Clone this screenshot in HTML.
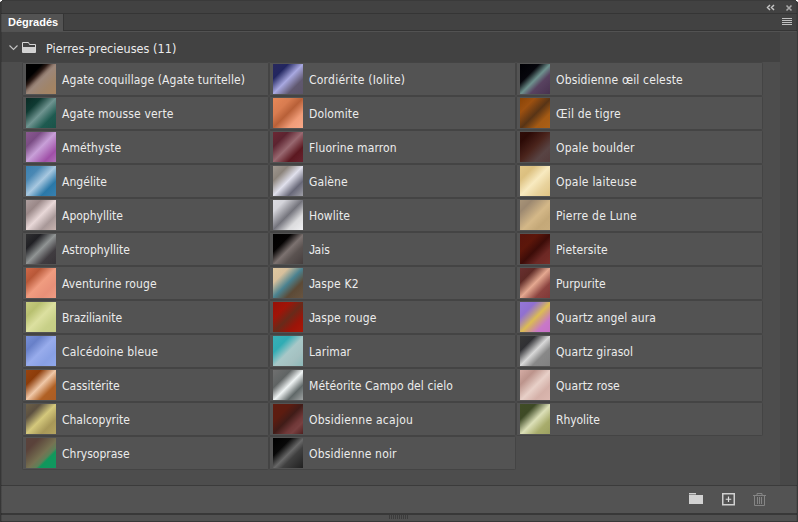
<!DOCTYPE html>
<html lang="fr">
<head>
<meta charset="utf-8">
<title>Dégradés</title>
<style>
html,body{margin:0;padding:0}
body{width:798px;height:522px;overflow:hidden;position:relative;background:#4d4d4d;font-family:"DejaVu Sans Condensed","DejaVu Sans","Liberation Sans",sans-serif;font-size:12px;color:#ececec}
div,i,span,svg{position:absolute;display:block;box-sizing:border-box}
.topbar{left:0;top:0;width:798px;height:13px;background:#424242}
.topline{left:0;top:13px;width:798px;height:1px;background:#353535}
.tabbar{left:0;top:14px;width:798px;height:17px;background:#424242;border-bottom:1px solid #353535}
.tab{left:1px;top:0;width:63px;height:17px;border-right:1px solid #353535;background:#535353;font-family:"Liberation Sans",sans-serif;font-weight:bold;font-size:11px;line-height:17px;color:#fff;padding-left:7px;white-space:nowrap}
.tabline{left:0;top:31px;width:798px;height:1px;background:#525252}
.bl{left:0;top:0;width:2px;height:522px;background:linear-gradient(90deg,#363636 0,#363636 1px,rgba(0,0,0,.13) 1px,rgba(0,0,0,.13) 2px)}
.br{left:796px;top:0;width:2px;height:522px;background:linear-gradient(90deg,rgba(0,0,0,.08) 0,rgba(0,0,0,.08) 1px,#393939 1px,#393939 2px)}
.hdr{left:1px;top:32px;width:779px;height:30px;background:#424242}
.hdr .t{left:45px;top:2px;font-size:12.5px;letter-spacing:.05px;line-height:30px;white-space:nowrap;color:#ececec}
.scroll{left:780px;top:32px;width:16px;height:453px;background:#484848}
.list{left:0;top:0;width:0;height:0}
.col{top:62px;width:247px;height:408px}
.c1{left:22px}.c2{left:269px}.c3{left:516px}
.row{position:relative;width:247px;height:34px;border:1px solid #444;border-radius:1.5px;background:#535353}
.sw{left:3px;top:1px;width:30px;height:30px}
.nm{left:39px;top:1px;line-height:32px;white-space:nowrap}
.botline{left:0;top:485px;width:798px;height:1px;background:#3b3b3b}
.botbar{left:1px;top:486px;width:796px;height:27px;background:#535353}
.botline2{left:0;top:513px;width:798px;height:2px;background:#383838}
.strip{left:1px;top:515px;width:796px;height:6px;background:#505050}
.botedge{left:0;top:521px;width:798px;height:1px;background:#383838}
.j{font-weight:normal;font-family:"Liberation Sans",sans-serif;letter-spacing:-0.6px}
.cn{width:1px;height:1px;background:#fff}
.topedge{left:0;top:0;width:798px;height:1px;background:#3a3a3a}
</style>
</head>
<body>
<div class="topbar"></div>
<div class="topline"></div>
<div class="tabbar"><div class="tab">Dégradés</div></div>
<div class="tabline"></div>
<div class="hdr">
<svg style="left:7px;top:12px" width="12" height="7" viewBox="0 0 12 7"><path d="M1.5 1.5 L5.5 5.5 L9.5 1.5" fill="none" stroke="#c4c4c4" stroke-width="1.1"/></svg>
<svg style="left:21px;top:10px" width="14" height="11" viewBox="0 0 14 11"><path d="M0.5 0.5 H6.5 L7.5 2.5 H13.5 V10.5 H0.5 Z" fill="none" stroke="#d6d6d6"/><rect x="1" y="5" width="12" height="5.5" fill="#d2d2d2"/></svg>
<span class="t">Pierres-precieuses (11)</span>
</div>
<div class="scroll"></div>
<svg style="left:766px;top:4px" width="10" height="8" viewBox="0 0 10 8"><path d="M4 1 L1.5 3.5 L4 6 M8 1 L5.5 3.5 L8 6" fill="none" stroke="#c6c6c6" stroke-width="1.45"/></svg>
<svg style="left:785px;top:4px" width="8" height="8" viewBox="0 0 8 8"><path d="M1.5 1.5 L6.5 6.5 M6.5 1.5 L1.5 6.5" fill="none" stroke="#a8a8a8" stroke-width="1.6"/></svg>
<svg style="left:782px;top:18px" width="10" height="7" viewBox="0 0 10 7"><path d="M0 0.5 H10 M0 2.5 H10 M0 4.5 H10 M0 6.5 H10" stroke="#c0c0c0" stroke-width="1"/></svg>
<div class="list">
<div class="col c1">
<div class="row"><i class="sw" style="background:linear-gradient(135deg,#000 0%,#000 27%,#2a1a14 36%,#5a463e 41%,#8a7468 46%,#9c877a 51%,#a08468 75%,#a8845f 100%)"></i><span class="nm" style="letter-spacing:0.106px">Agate coquillage (Agate turitelle)</span></div>
<div class="row"><i class="sw" style="background:linear-gradient(135deg,#0a2a24 0%,#0f3a32 25%,#6f9490 50%,#1e5a50 75%,#1a5248 100%)"></i><span class="nm" style="letter-spacing:0.159px">Agate mousse verte</span></div>
<div class="row"><i class="sw" style="background:linear-gradient(135deg,#8a5a90 0%,#7a4c84 25%,#c8a0d8 50%,#a050a8 80%,#b070b8 100%)"></i><span class="nm" style="letter-spacing:0.075px">Améthyste</span></div>
<div class="row"><i class="sw" style="background:linear-gradient(135deg,#3a80b0 0%,#4a88b4 25%,#a8c8e0 50%,#2a78a8 75%,#3880b0 100%)"></i><span class="nm" style="letter-spacing:0.057px">Angélite</span></div>
<div class="row"><i class="sw" style="background:linear-gradient(135deg,#b0a0a0 0%,#9a8888 25%,#e8d8d8 50%,#a89898 75%,#c8b4b0 100%)"></i><span class="nm" style="letter-spacing:0.0px">Apophyllite</span></div>
<div class="row"><i class="sw" style="background:linear-gradient(135deg,#303032 0%,#202024 25%,#909494 50%,#403c40 75%,#383438 100%)"></i><span class="nm" style="letter-spacing:-0.017px">Astrophyllite</span></div>
<div class="row"><i class="sw" style="background:linear-gradient(135deg,#d06848 0%,#b85838 25%,#f09c80 50%,#e89078 75%,#f09c84 100%)"></i><span class="nm" style="letter-spacing:0.1px">Aventurine rouge</span></div>
<div class="row"><i class="sw" style="background:linear-gradient(135deg,#c8cc80 0%,#b8c070 25%,#dce0a0 50%,#c8d088 75%,#c4cc84 100%)"></i><span class="nm" style="letter-spacing:-0.036px">Brazilianite</span></div>
<div class="row"><i class="sw" style="background:linear-gradient(135deg,#7890d8 0%,#6880c8 25%,#98acec 50%,#88a0e4 75%,#90a8ec 100%)"></i><span class="nm" style="letter-spacing:0.193px">Calcédoine bleue</span></div>
<div class="row"><i class="sw" style="background:linear-gradient(135deg,#984410 0%,#8c3c0a 25%,#f0c8a8 50%,#b06024 74%,#aa5c24 100%)"></i><span class="nm" style="letter-spacing:0.01px">Cassitérite</span></div>
<div class="row"><i class="sw" style="background:linear-gradient(135deg,#6c6048 0%,#5c5040 24%,#d4c87c 50%,#a89858 75%,#b4a460 100%)"></i><span class="nm" style="letter-spacing:-0.027px">Chalcopyrite</span></div>
<div class="row"><i class="sw" style="background:linear-gradient(135deg,#5a423c 0%,#5a423a 22%,#767252 54%,#5e8058 66%,#10985c 72%,#109860 100%)"></i><span class="nm" style="letter-spacing:0.0px">Chrysoprase</span></div>
</div>
<div class="col c2">
<div class="row"><i class="sw" style="background:linear-gradient(135deg,#28285c 0%,#222660 25%,#a8a8e0 50%,#605870 75%,#5c5468 100%)"></i><span class="nm" style="letter-spacing:0.239px">Cordiérite (Iolite)</span></div>
<div class="row"><i class="sw" style="background:linear-gradient(135deg,#e88858 0%,#d87c50 30%,#b86038 50%,#f09c78 75%,#f8a888 100%)"></i><span class="nm" style="letter-spacing:0.129px">Dolomite</span></div>
<div class="row"><i class="sw" style="background:linear-gradient(135deg,#6c2834 0%,#5c2430 25%,#986870 50%,#5c1820 75%,#682430 100%)"></i><span class="nm" style="letter-spacing:0.114px">Fluorine marron</span></div>
<div class="row"><i class="sw" style="background:linear-gradient(135deg,#a09890 0%,#8c847c 25%,#e0e0ec 50%,#686878 75%,#a0a0a8 100%)"></i><span class="nm" style="letter-spacing:0.12px">Galène</span></div>
<div class="row"><i class="sw" style="background:linear-gradient(135deg,#dcdce2 0%,#d4d4da 20%,#74747c 50%,#dcdcde 74%,#f0f0f2 100%)"></i><span class="nm" style="letter-spacing:0.067px">Howlite</span></div>
<div class="row"><i class="sw" style="background:linear-gradient(135deg,#000 0%,#050303 30%,#7c7270 52%,#5a5250 70%,#463e3e 100%)"></i><span class="nm" style="letter-spacing:0.15px"><b class="j">J</b>ais</span></div>
<div class="row"><i class="sw" style="background:linear-gradient(135deg,#e0c8a0 0%,#d8c09c 25%,#4a8290 50%,#5c4a36 72%,#685440 100%)"></i><span class="nm" style="letter-spacing:0.2px"><b class="j">J</b>aspe K2</span></div>
<div class="row"><i class="sw" style="background:linear-gradient(135deg,#981008 0%,#a01408 28%,#682a1a 52%,#9c1408 76%,#a81808 100%)"></i><span class="nm" style="letter-spacing:0.2px"><b class="j">J</b>aspe rouge</span></div>
<div class="row"><i class="sw" style="background:linear-gradient(135deg,#38b0b8 0%,#30acb4 28%,#a8c8c8 52%,#a4c0c0 75%,#8cb8b8 100%)"></i><span class="nm" style="letter-spacing:0.067px">Larimar</span></div>
<div class="row"><i class="sw" style="background:linear-gradient(135deg,#707070 0%,#606464 30%,#f0f4f4 52%,#606868 75%,#a0a4a4 100%)"></i><span class="nm" style="letter-spacing:0.088px">Météorite Campo del cielo</span></div>
<div class="row"><i class="sw" style="background:linear-gradient(135deg,#601c10 0%,#5c1c10 30%,#401c18 50%,#703838 70%,#784040 80%,#502020 100%)"></i><span class="nm" style="letter-spacing:0.25px">Obsidienne acajou</span></div>
<div class="row"><i class="sw" style="background:linear-gradient(135deg,#000 0%,#080808 30%,#686868 52%,#404040 65%,#202020 100%)"></i><span class="nm" style="letter-spacing:0.171px">Obsidienne noir</span></div>
</div>
<div class="col c3">
<div class="row"><i class="sw" style="background:linear-gradient(135deg,#000004 0%,#06060c 32%,#6e928e 51%,#584260 67%,#48324f 100%)"></i><span class="nm" style="letter-spacing:0.157px">Obsidienne œil celeste</span></div>
<div class="row"><i class="sw" style="background:linear-gradient(135deg,#8a4406 0%,#9c5010 25%,#583416 52%,#a45a14 75%,#ac6016 100%)"></i><span class="nm" style="letter-spacing:0.173px">Œil de tigre</span></div>
<div class="row"><i class="sw" style="background:linear-gradient(135deg,#2e0c08 0%,#2c0a06 18%,#4a241c 48%,#584444 74%,#543c3c 100%)"></i><span class="nm" style="letter-spacing:0.183px">Opale boulder</span></div>
<div class="row"><i class="sw" style="background:linear-gradient(135deg,#e2c686 0%,#dcc080 24%,#f8eac0 50%,#e8d29c 74%,#e0c484 100%)"></i><span class="nm" style="letter-spacing:0.223px">Opale laiteuse</span></div>
<div class="row"><i class="sw" style="background:linear-gradient(135deg,#a89478 0%,#9c8870 20%,#d4b888 54%,#c4a878 76%,#c8ac7c 100%)"></i><span class="nm" style="letter-spacing:0.246px">Pierre de Lune</span></div>
<div class="row"><i class="sw" style="background:linear-gradient(135deg,#58140c 0%,#5c160a 30%,#3c0c08 52%,#6c2824 75%,#782e28 100%)"></i><span class="nm" style="letter-spacing:0.111px">Pietersite</span></div>
<div class="row"><i class="sw" style="background:linear-gradient(135deg,#683030 0%,#5e2a26 25%,#e4a890 50%,#8c4440 75%,#803838 100%)"></i><span class="nm" style="letter-spacing:0.0px">Purpurite</span></div>
<div class="row"><i class="sw" style="background:linear-gradient(135deg,#9478d8 0%,#9070d0 26%,#b89890 41%,#dcbc54 52%,#d2a07c 62%,#c878c8 78%,#c870c8 100%)"></i><span class="nm" style="letter-spacing:0.144px">Quartz angel aura</span></div>
<div class="row"><i class="sw" style="background:linear-gradient(135deg,#383838 0%,#303034 25%,#d8d8d8 50%,#888888 70%,#808080 100%)"></i><span class="nm" style="letter-spacing:0.092px">Quartz girasol</span></div>
<div class="row"><i class="sw" style="background:linear-gradient(135deg,#d4aca4 0%,#bc948c 25%,#e8d0c8 52%,#d4b0a8 75%,#dcb8b0 100%)"></i><span class="nm" style="letter-spacing:0.1px">Quartz rose</span></div>
<div class="row"><i class="sw" style="background:linear-gradient(135deg,#404c26 0%,#3e4a26 26%,#dce0b8 52%,#a8ac6c 76%,#9ca060 100%)"></i><span class="nm" style="letter-spacing:-0.057px">Rhyolite</span></div>
</div>
</div>
<div class="botline"></div>
<div class="botbar">
<svg style="left:688px;top:7px" width="14" height="11" viewBox="0 0 14 11"><rect x="0" y="0" width="7" height="1" fill="#d0d0d0"/><rect x="0" y="1" width="7" height="1" fill="#909090"/><rect x="0" y="2" width="14" height="9" fill="#d2d2d2"/></svg>
<svg style="left:721px;top:7px" width="13" height="13" viewBox="0 0 13 13"><rect x="0.75" y="0.75" width="11.5" height="11" fill="none" stroke="#d0d0d0" stroke-width="1.5"/><path d="M6.5 3.5 V9 M3.75 6.25 H9.25" stroke="#e0e0e0" stroke-width="1.2"/></svg>
<svg style="left:752px;top:7px" width="13" height="13" viewBox="0 0 13 13"><path d="M4 2 V0.5 H9 V2 M0 2.5 H13 M1.5 3 V12.5 H11.5 V3 M4.5 4 V11 M6.5 4 V11 M8.5 4 V11" fill="none" stroke="#858585" stroke-width="1"/></svg>
</div>
<div class="botline2"></div>
<div class="strip"><svg style="left:388px;top:0px" width="20" height="4" viewBox="0 0 20 4"><path d="M0.5 0V4M2.5 0V4M4.5 0V4M6.5 0V4M8.5 0V4M10.5 0V4M12.5 0V4M14.5 0V4M16.5 0V4M18.5 0V4" stroke="#3c3c3c"/></svg></div>
<div class="botedge"></div>
<div class="topedge"></div>
<div class="bl"></div><div class="br"></div>
<div class="cn" style="left:0;top:0;width:2px"></div><div class="cn" style="left:0;top:1px;background:#d0d0d0"></div><div class="cn" style="left:796px;top:0;width:2px"></div><div class="cn" style="left:797px;top:1px;background:#d0d0d0"></div>
</body>
</html>
